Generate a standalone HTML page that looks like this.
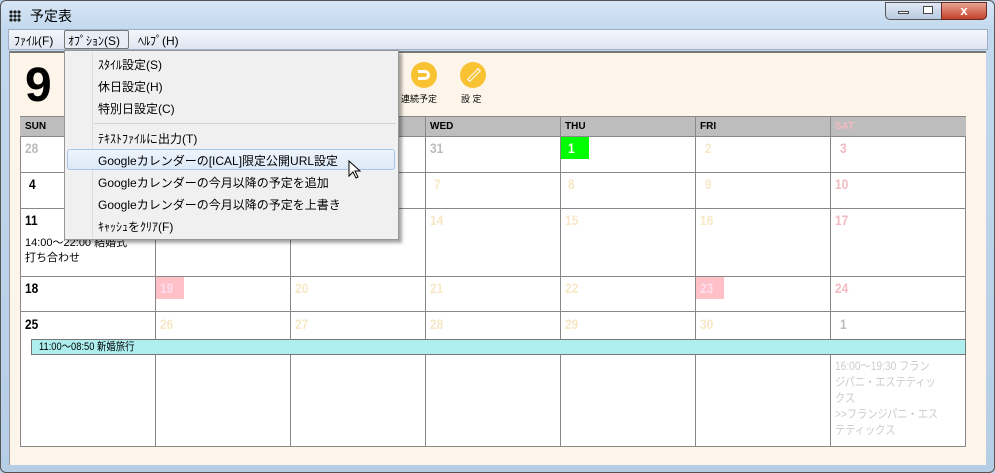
<!DOCTYPE html><html><head><meta charset="utf-8"><style>
*{margin:0;padding:0;box-sizing:border-box}
body{width:995px;height:473px;overflow:hidden;background:#b9d1ea;font-family:"Liberation Sans","Noto Sans CJK JP",sans-serif;position:relative}
.abs{position:absolute}
#frame{left:0;top:0;width:995px;height:473px;background:linear-gradient(#d6e6f6 0,#c2d8ee 30px,#b6cde6);border:1px solid #555;border-radius:6px}
#title{left:30px;top:6px;font-size:14px;color:#000}
#menu{left:8px;top:29px;width:980px;height:21px;background:linear-gradient(#f4f6fb,#dfe5f1);border:1px solid #a0aec4}
.mi{top:32px;font-size:12px;color:#000}
#content{left:9px;top:51px;width:977px;height:414px;background:#fdf5ea;border-top:2px solid #777;border-left:1px solid #999}
.grid{left:20px;top:116px;width:946px;height:331px;background:#fff;border:1px solid #888}
.vl{top:116px;width:1px;height:331px;background:#888}
.hl{left:20px;width:946px;height:1px;background:#888}
.hd{top:117px;height:19px;left:20px;width:946px;background:#bdbdbd}
.hdt{top:121px;font-size:10px;font-weight:bold}
.d{font-size:14px;font-weight:bold;transform:scaleX(.85);transform-origin:left}
#dd{left:64px;top:50px;width:335px;height:190px;background:#f0f0f0;border:1px solid #979797;box-shadow:3px 3px 3px rgba(0,0,0,.35)}
.it{left:98px;font-size:12px;color:#000}
</style></head><body>
<div id="frame" class="abs"></div>
<div class="abs" style="left:9px;top:10px;width:12px;height:12px;background:
radial-gradient(circle,#222 1.6px,transparent 1.8px) 0 0/4px 4px"></div>
<div id="title" class="abs">予定表</div>
<div class="abs" style="left:885px;top:2px;width:102px;height:18px;border:1px solid #555;border-radius:0 0 5px 5px;background:linear-gradient(#dfe8f4,#b9cbe0)"></div>
<div class="abs" style="left:941px;top:2px;width:46px;height:18px;border:1px solid #6a2a20;border-radius:0 0 5px 0;background:linear-gradient(#e8a493,#c5422b);color:#fff;font-weight:bold;font-size:13px;text-align:center;line-height:16px">x</div>
<div class="abs" style="left:898px;top:11px;width:11px;height:3px;background:#fff;border:1px solid #444"></div>
<div class="abs" style="left:923px;top:6px;width:10px;height:8px;border:1px solid #444;background:#fff"></div>
<div id="menu" class="abs"></div>
<div class="abs mi" style="left:14px">ﾌｧｲﾙ(F)</div>
<div class="abs" style="left:64px;top:30px;width:65px;height:19px;border:1px solid #777;border-radius:2px;background:#e8ecf4"></div>
<div class="abs mi" style="left:68px">ｵﾌﾟｼｮﾝ(S)</div>
<div class="abs mi" style="left:138px">ﾍﾙﾌﾟ(H)</div>
<div id="content" class="abs"></div>
<div class="abs" style="left:25px;top:58px;font-size:48px;font-weight:bold">9</div>
<div class="abs" style="left:411px;top:62px;width:26px;height:26px;border-radius:50%;background:#f8c232"></div>
<div class="abs" style="left:418px;top:70px;width:12px;height:10px;border:3px solid #fff;border-left:none;border-radius:0 5px 5px 0"></div>
<div class="abs" style="left:460px;top:62px;width:26px;height:26px;border-radius:50%;background:#f8c232"></div>
<div class="abs" style="left:466px;top:73px;width:16px;height:4px;border:1px solid #fff;transform:rotate(-45deg)"></div>
<div class="abs" style="left:401px;top:92px;font-size:9px">連続予定</div>
<div class="abs" style="left:461px;top:92px;font-size:9px">設 定</div>
<div class="abs grid"></div>
<div class="abs hd"></div>
<div class="abs vl" style="left:155px"></div><div class="abs vl" style="left:290px"></div><div class="abs vl" style="left:425px"></div><div class="abs vl" style="left:560px"></div><div class="abs vl" style="left:695px"></div><div class="abs vl" style="left:830px"></div>
<div class="abs hl" style="top:136px"></div><div class="abs hl" style="top:172px"></div><div class="abs hl" style="top:208px"></div><div class="abs hl" style="top:276px"></div><div class="abs hl" style="top:311px"></div>
<div class="abs hdt" style="left:25px">SUN</div><div class="abs hdt" style="left:430px">WED</div><div class="abs hdt" style="left:565px">THU</div><div class="abs hdt" style="left:700px">FRI</div><div class="abs hdt" style="left:835px;color:#f4b9c2">SAT</div>
<div class="abs" style="left:561px;top:137px;width:28px;height:22px;background:#0f0"></div>
<div class="abs" style="left:156px;top:277px;width:28px;height:22px;background:#ffc0c8"></div>
<div class="abs" style="left:696px;top:277px;width:28px;height:22px;background:#ffc0c8"></div>
<div class="abs d" style="left:25px;top:140px;color:#bbb">28</div>
<div class="abs d" style="left:430px;top:140px;color:#bbb">31</div>
<div class="abs d" style="left:568px;top:140px;color:#fff">1</div>
<div class="abs d" style="left:705px;top:140px;color:#f7e8c6">2</div>
<div class="abs d" style="left:840px;top:140px;color:#f4b9c2">3</div>
<div class="abs d" style="left:29px;top:176px">4</div>
<div class="abs d" style="left:434px;top:176px;color:#f7e8c6">7</div>
<div class="abs d" style="left:568px;top:176px;color:#f7e8c6">8</div>
<div class="abs d" style="left:705px;top:176px;color:#f7e8c6">9</div>
<div class="abs d" style="left:835px;top:176px;color:#f4b9c2">10</div>
<div class="abs d" style="left:25px;top:212px">11</div>
<div class="abs d" style="left:430px;top:212px;color:#f7e8c6">14</div>
<div class="abs d" style="left:565px;top:212px;color:#f7e8c6">15</div>
<div class="abs d" style="left:700px;top:212px;color:#f7e8c6">16</div>
<div class="abs d" style="left:835px;top:212px;color:#f4b9c2">17</div>
<div class="abs" style="left:25px;top:236px;font-size:11px;line-height:15px">14:00～22:00 結婚式<br>打ち合わせ</div>
<div class="abs d" style="left:160px;top:280px;color:#fde">19</div>
<div class="abs d" style="left:25px;top:280px">18</div>
<div class="abs d" style="left:295px;top:280px;color:#f7e8c6">20</div>
<div class="abs d" style="left:430px;top:280px;color:#f7e8c6">21</div>
<div class="abs d" style="left:565px;top:280px;color:#f7e8c6">22</div>
<div class="abs d" style="left:700px;top:280px;color:#fde">23</div>
<div class="abs d" style="left:835px;top:280px;color:#f4b9c2">24</div>
<div class="abs d" style="left:25px;top:316px">25</div>
<div class="abs d" style="left:160px;top:316px;color:#f7e8c6">26</div>
<div class="abs d" style="left:295px;top:316px;color:#f7e8c6">27</div>
<div class="abs d" style="left:430px;top:316px;color:#f7e8c6">28</div>
<div class="abs d" style="left:565px;top:316px;color:#f7e8c6">29</div>
<div class="abs d" style="left:700px;top:316px;color:#f7e8c6">30</div>
<div class="abs d" style="left:840px;top:316px;color:#bbb">1</div>
<div class="abs" style="left:31px;top:339px;width:935px;height:16px;background:#aeeeee;border:1px solid #777;font-size:11px;padding-left:7px;line-height:14px"><span style="display:inline-block;transform:scaleX(.85);transform-origin:left">11:00～08:50 新婚旅行</span></div>
<div class="abs" style="left:835px;top:358px;font-size:12px;line-height:16px;color:#ccc;width:125px;transform:scaleX(.85);transform-origin:left">16:00～19:30 フラン<br>ジパニ・エステティッ<br>クス<br>&gt;&gt;フランジパニ・エス<br>テティックス</div>
<div id="dd" class="abs"></div>
<div class="abs" style="left:92px;top:52px;width:1px;height:186px;background:#ddd"></div>
<div class="abs" style="left:94px;top:123px;width:302px;height:1px;background:#d4d4d4"></div>
<div class="abs" style="left:67px;top:149px;width:328px;height:21px;border:1px solid #a8c6ea;border-radius:3px;background:linear-gradient(#eef4fc,#dce9f8)"></div>
<div class="abs it" style="top:56px">ｽﾀｲﾙ設定(S)</div>
<div class="abs it" style="top:78px">休日設定(H)</div>
<div class="abs it" style="top:100px">特別日設定(C)</div>
<div class="abs it" style="top:130px">ﾃｷｽﾄﾌｧｲﾙに出力(T)</div>
<div class="abs it" style="top:152px">Googleカレンダーの[ICAL]限定公開URL設定</div>
<div class="abs it" style="top:174px">Googleカレンダーの今月以降の予定を追加</div>
<div class="abs it" style="top:196px">Googleカレンダーの今月以降の予定を上書き</div>
<div class="abs it" style="top:218px">ｷｬｯｼｭをｸﾘｱ(F)</div>
<svg class="abs" style="left:348px;top:160px" width="14" height="20"><path d="M1 1V16L5 12L8 18L10 17L7 11H12Z" fill="#fff" stroke="#000"/></svg>
</body></html>
